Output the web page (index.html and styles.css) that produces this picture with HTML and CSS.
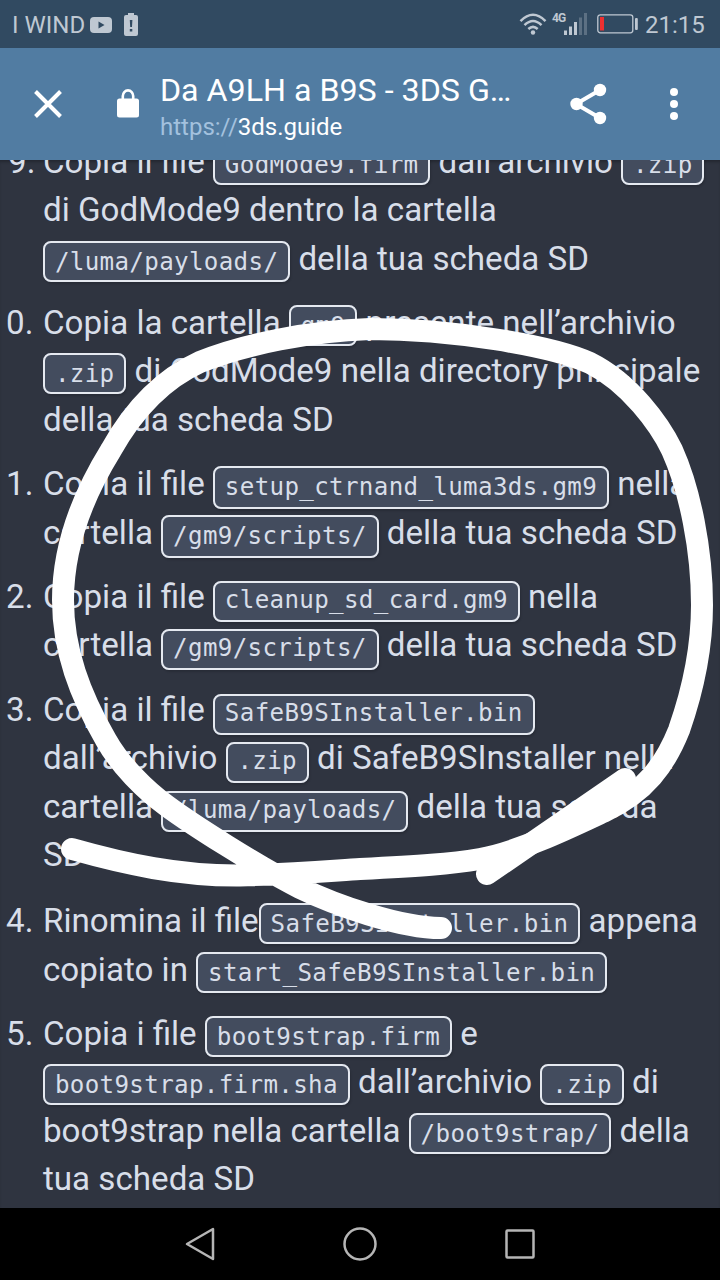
FILE: index.html
```html
<!DOCTYPE html>
<html lang="it">
<head>
<meta charset="utf-8">
<title>Da A9LH a B9S - 3DS Guide</title>
<link rel="stylesheet" href="styles.css">
</head>
<body>
<div class="phone">
  <header class="status">
    <span class="carrier">I WIND</span>
    <svg class="yt" width="22" height="16" viewBox="0 0 22 16"><rect width="22" height="16" rx="4" fill="#bfc8d2"/><path d="M8.5 4.5v7l6-3.500z" fill="#314a61"/></svg>
    <svg class="alert" width="14" height="24" viewBox="0 0 14 24"><path d="M4 0h6v2h2q2 0 2 2v17q0 2-2 2H2q-2 0-2-2V4q0-2 2-2h2z" fill="#bfc8d2"/><path d="M5.800 7h2.600l-.4 7H6.200zM5.800 16h2.500v2.500H5.800z" fill="#314a61"/></svg>
    <span class="spacer"></span>
    <svg class="wifi" width="28" height="23" viewBox="0 0 28 23" fill="none" stroke="#bfc8d2" stroke-width="2.500"><path d="M1.500 8.200Q14-4.500 26.500 8.200M5.500 12.200q8.500-8.400 17 0M9.300 16q4.700-4.300 9.400 0"/><circle cx="14" cy="19.500" r="2.200" fill="#bfc8d2" stroke="none"/></svg>
    <span class="net">4G</span>
    <svg class="signal" width="24" height="22" viewBox="0 0 24 22" fill="#bfc8d2"><rect x="0" y="17.500" width="3" height="4.500"/><rect x="5" y="13.500" width="3" height="8.500"/><rect x="10" y="9" width="3" height="13"/><g opacity=".3"><rect x="15" y="4.500" width="3" height="17.500"/><rect x="20" y="0" width="3" height="22"/></g></svg>
    <svg class="battery" width="42" height="20" viewBox="0 0 42 20"><rect x=".8" y=".8" width="35" height="18" rx="2.500" fill="none" stroke="#bfc8d2" stroke-width="1.300"/><rect x="3" y="3" width="4" height="13.500" fill="#ee3030"/><rect x="38" y="4" width="2.800" height="12" rx="1" fill="#bfc8d2"/></svg>
    <span class="clock">21:15</span>
  </header>

  <div class="bar">
    <svg class="close" width="28" height="28" viewBox="0 0 28 28" stroke="#fff" stroke-width="4"><path d="M1.500 1.500l25 25M26.500 1.500l-25 25"/></svg>
    <svg class="lock" width="22" height="29" viewBox="0 0 22 29"><path d="M5.800 12V7a5.200 5.600 0 0 1 10.400 0v5" fill="none" stroke="#fff" stroke-width="2.600"/><rect y="9.500" width="22" height="19" rx="2.500" fill="#fff"/></svg>
    <div class="page-id">
      <div class="title">Da A9LH a B9S - 3DS G…</div>
      <div class="url"><span class="scheme">https://</span>3ds.guide</div>
    </div>
    <svg class="share" width="38" height="42" viewBox="0 0 38 42" fill="#fff"><path d="M30 7L6 21l24 14" fill="none" stroke="#fff" stroke-width="4"/><circle cx="30" cy="7" r="6.200"/><circle cx="6.500" cy="21" r="6.200"/><circle cx="30" cy="35" r="6.200"/></svg>
    <svg class="more" width="8" height="32" viewBox="0 0 8 32" fill="#fff"><circle cx="4" cy="4" r="4"/><circle cx="4" cy="16" r="4"/><circle cx="4" cy="28" r="4"/></svg>
  </div>

  <main class="content">
    <div class="steps">
      <div class="step shifted"><span class="num">9.</span><div class="text">
        <p>Copia il file <code>GodMode9.firm</code> dall’archivio <code>.zip</code></p>
        <p>di GodMode9 dentro la cartella</p>
        <p><code>/luma/payloads/</code> della tua scheda SD</p></div></div>
      <div class="step"><span class="num">0.</span><div class="text">
        <p>Copia la cartella <code>gm9</code> presente nell’archivio</p>
        <p><code>.zip</code> di GodMode9 nella directory principale</p>
        <p>della tua scheda SD</p></div></div>
      <div class="step tall"><span class="num">1.</span><div class="text">
        <p>Copia il file <code>setup_ctrnand_luma3ds.gm9</code> nella</p>
        <p>cartella <code>/gm9/scripts/</code> della tua scheda SD</p></div></div>
      <div class="step low"><span class="num">2.</span><div class="text">
        <p>Copia il file <code>cleanup_sd_card.gm9</code> nella</p>
        <p>cartella <code>/gm9/scripts/</code> della tua scheda SD</p></div></div>
      <div class="step low long"><span class="num">3.</span><div class="text">
        <p>Copia il file <code>SafeB9SInstaller.bin</code></p>
        <p>dall’archivio <code>.zip</code> di SafeB9SInstaller nella</p>
        <p>cartella <code>/luma/payloads/</code> della tua scheda</p>
        <p>SD</p></div></div>
      <div class="step"><span class="num">4.</span><div class="text">
        <p>Rinomina il file<code>SafeB9SInstaller.bin</code> appena</p>
        <p>copiato in <code>start_SafeB9SInstaller.bin</code></p></div></div>
      <div class="step"><span class="num">5.</span><div class="text">
        <p>Copia i file <code>boot9strap.firm</code> e</p>
        <p><code>boot9strap.firm.sha</code> dall’archivio <code>.zip</code> di</p>
        <p>boot9strap nella cartella <code>/boot9strap/</code> della</p>
        <p>tua scheda SD</p></div></div>
    </div>
  </main>

  <nav class="nav">
    <svg width="34" height="36" viewBox="0 0 34 36"><path d="M30 3v30L4 18z"/></svg>
    <svg width="36" height="36" viewBox="0 0 36 36"><circle cx="18" cy="18" r="15.500"/></svg>
    <svg width="34" height="34" viewBox="0 0 34 34"><rect x="3.500" y="3.500" width="27" height="27" rx="1"/></svg>
  </nav>

  <svg class="scribble" width="720" height="1280" viewBox="0 0 720 1280">
    <path d="M72 849C125 864 180 876 240 875.500C300 874 340 870 360 869C420 866 450 864 480 859C520 852 575 825 605 811C645 792 665 765 679 730C693 690 702 650 702 605C702 550 690 490 672 450C660 425 630 383 590 363C550 345 450 329 370 329C310 331 245 344 200 362C165 378 135 407 111 450C80 500 63 550 63 600C63 650 80 695 106 740C120 765 145 790 167 806C190 823 255 865 300 888C335 905 400 928 441 928"/>
    <path d="M625 779L487 874"/>
  </svg>
</div>
</body>
</html>
```
FILE: styles.css
```css
* { box-sizing: border-box; }
body { margin: 0; background: #000; font-family: Roboto, sans-serif; }
.phone { position: relative; width: 720px; height: 1280px; display: flex; flex-direction: column; overflow: hidden; }
svg { flex: none; display: block; }

.status { flex: none; height: 48px; padding: 0 15px 0 12px; display: flex; align-items: center; background: #314a61; color: #bfc8d2; font-size: 24px; white-space: nowrap; }
.carrier { width: 78px; font-size: 24px; padding-top: 2px; }
.yt { margin-top: 1px; }
.alert { margin-left: 12px; margin-top: 1px; }
.spacer { flex: 1; }
.net { font: bold 12px Roboto, sans-serif; letter-spacing: -.8px; margin: -12px 0 0 5px; width: 12px; }
.signal { margin-left: 0; }
.battery { margin-left: 9px; }
.clock { width: 60px; margin-left: 6px; padding-top: 2px; }

.bar { flex: none; height: 112px; padding-left: 34px; display: flex; align-items: center; background: #517ca2; color: #fff; white-space: nowrap; }
.lock { margin-left: 55px; margin-top: -1px; }
.page-id { width: 410px; padding-left: 21px; }
.title { font-size: 32.200px; line-height: 40px; margin-top: 6px; }
.url { font-size: 24px; line-height: 34px; }
.scheme { color: #a3c1de; }
.share { margin-left: 21px; }
.more { margin-left: 62px; }

.content { flex: 1; overflow: hidden; background: #2f3440; color: #d8dee9; box-shadow: inset 0 3px 3px -1px rgba(0, 0, 0, .25); }
.steps { margin-top: -22px; font-size: 33.150px; line-height: 48.350px; white-space: nowrap; }
.step { display: flex; margin-bottom: 16.100px; }
.step.long { margin-bottom: 18px; }
.num { width: 43px; padding-left: 6px; }
.shifted .num { padding-left: 8px; }
.text p { margin: 0; height: 48.350px; }
code { font-family: "DejaVu Sans Mono", monospace; font-size: 24.200px; letter-spacing: .33px; line-height: 1; padding: 5px 9.900px 4px; border: 2px solid #e5e9f0; border-radius: 8px; background: #434c5e; box-shadow: 1px 2px 2px rgba(0, 0, 0, .15); }
.low code { padding-top: 3px; padding-bottom: 6px; }
.tall code { padding-top: 5px; padding-bottom: 6px; }

.nav { flex: none; height: 72px; display: flex; justify-content: center; align-items: center; gap: 125px; background: #000; }
.nav svg { fill: none; stroke: #b5b5b5; stroke-width: 2.500; stroke-linejoin: round; }

.scribble { position: absolute; inset: 0; fill: none; stroke: #fff; stroke-width: 22; stroke-linecap: round; stroke-linejoin: round; }
```
